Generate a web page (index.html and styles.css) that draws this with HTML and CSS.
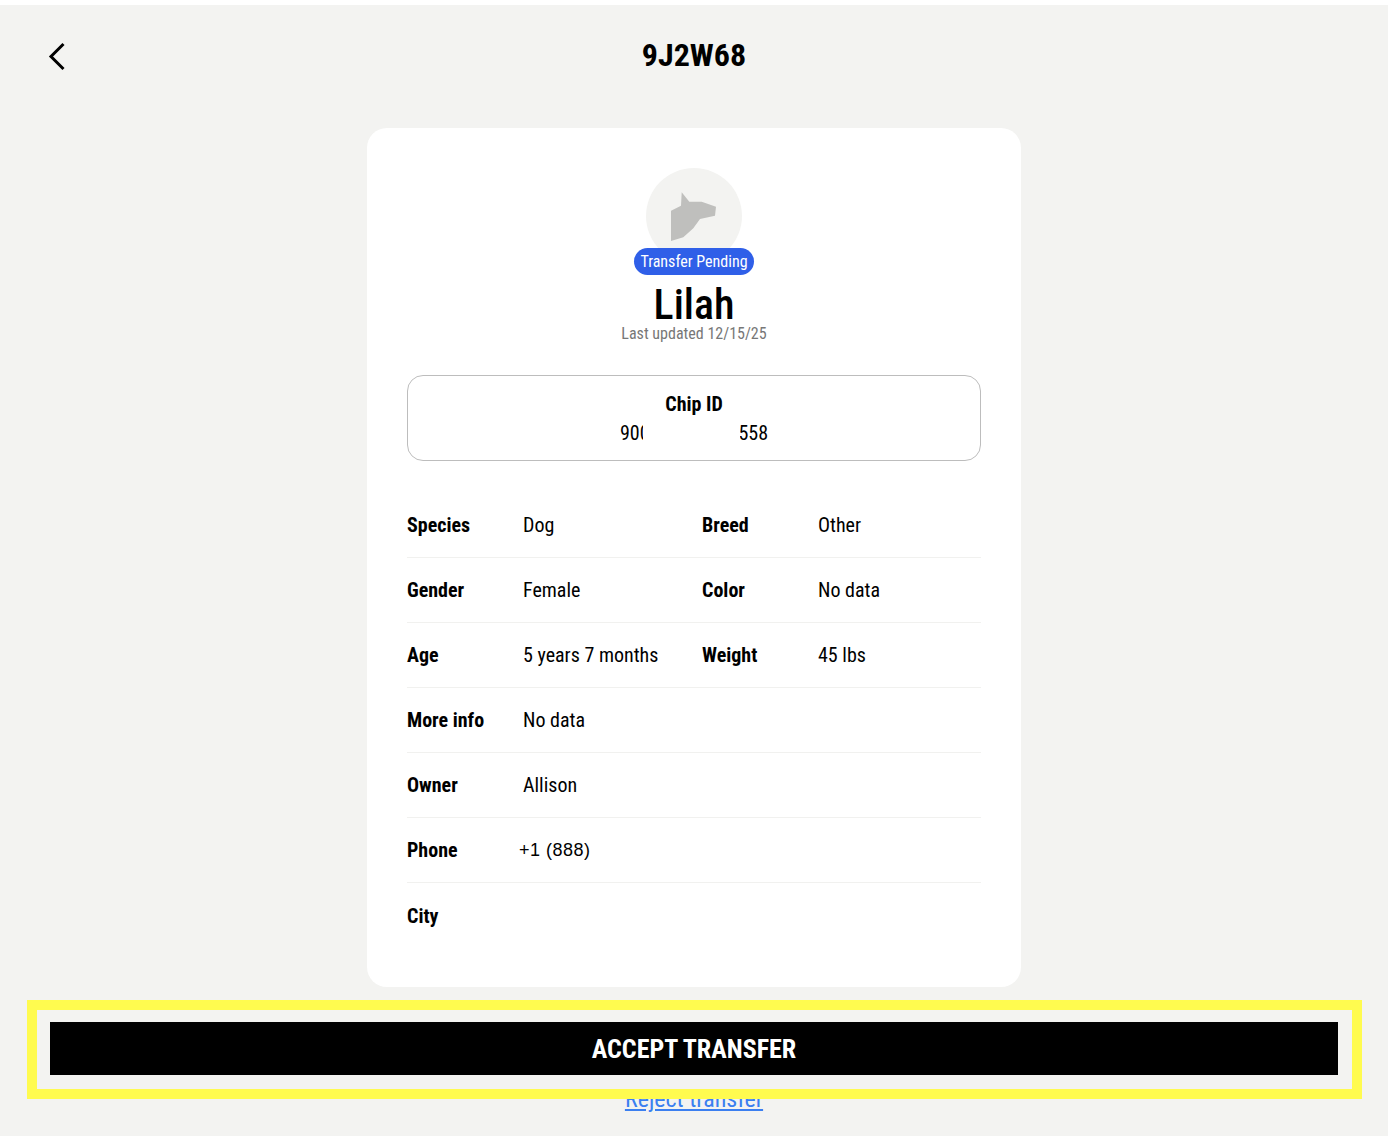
FILE: index.html
```
<!DOCTYPE html>
<html lang="en">
<head>
<meta charset="utf-8">
<title>9J2W68</title>
<link rel="stylesheet" href="styles.css">
</head>
<body>
<div class="top-strip"></div>
<main class="page">
  <header class="header">
    <svg class="back" width="24" height="32" viewBox="0 0 24 32" aria-hidden="true"><path d="M17.5 4 5 16.5 17.5 29" fill="none" stroke="#000" stroke-width="3"/></svg>
    <h1 class="title">9J2W68</h1>
  </header>
  <section class="card">
    <div class="avatar">
      <svg width="96" height="96" viewBox="0 0 96 96" aria-hidden="true"><path d="M35.7 24.3 43.3 33.7H55.7L70 38.7 69 47.7 54 51 47.3 60.3 37.3 69.3 25 73V42.7L35 37.7Z" fill="#bfbfbd"/></svg>
    </div>
    <span class="badge">Transfer Pending</span>
    <h2 class="name">Lilah</h2>
    <p class="updated">Last updated 12/15/25</p>
    <div class="chip">
      <div class="chip-label">Chip ID</div>
      <div class="chip-value"><span class="chip-digits">900164000271558<span class="chip-mask"></span></span></div>
    </div>
    <div class="rows">
      <div class="row"><b>Species</b><span>Dog</span><b>Breed</b><span>Other</span></div>
      <div class="row"><b>Gender</b><span>Female</span><b>Color</b><span>No data</span></div>
      <div class="row"><b>Age</b><span>5 years 7 months</span><b>Weight</b><span>45 lbs</span></div>
      <div class="row"><b>More info</b><span>No data</span></div>
      <div class="row"><b>Owner</b><span class="clip clip-owner">Allison B</span></div>
      <div class="row"><b>Phone</b><span class="clip clip-phone">+1 (888) 4</span></div>
      <div class="row row-last"><b>City</b><span></span></div>
    </div>
  </section>
  <button class="accept" type="button">ACCEPT TRANSFER</button>
  <a class="reject" href="#">Reject transfer</a>
</main>
<div class="highlight"></div>
</body>
</html>
```
FILE: styles.css
```
* { box-sizing: border-box; }
html, body { margin: 0; padding: 0; }
body {
  position: relative;
  height: 1136px;
  overflow: hidden;
  background: #f3f3f1;
  color: #000;
  font-family: "Roboto", "Liberation Sans", sans-serif;
  font-stretch: 75%;
}
.top-strip { height: 5px; background: #fff; }
.page { display: flex; flex-direction: column; align-items: center; }
.header { position: relative; width: 100%; height: 123px; }
.back { position: absolute; left: 46px; top: 35px; }
.title { margin: 0; padding-top: 32px; text-align: center; font-size: 32px; line-height: 36px; font-weight: 700; }
.card {
  width: 654px; height: 859px; padding: 40px;
  background: #fff; border-radius: 20px;
  display: flex; flex-direction: column; align-items: center;
}
.avatar { width: 96px; height: 96px; border-radius: 50%; background: #f3f3f1; flex: none; }
.avatar svg { display: block; }
.badge {
  margin-top: -16px; position: relative; height: 27px; width: 120px;
  border-radius: 14px; background: #2f5fe8; color: #fff;
  font-size: 16px; line-height: 27px; text-align: center; white-space: nowrap;
}
.name { margin: 8px 0 0; font-size: 42px; line-height: 44px; font-weight: 500; }
.updated { margin: -2px 0 0; font-size: 16px; line-height: 18px; color: #777; }
.chip {
  margin-top: 32px; width: 574px; height: 86px; flex: none;
  border: 1px solid #bdbdbd; border-radius: 16px; text-align: center; padding-top: 15px;
}
.chip-label { font-size: 20px; line-height: 26px; font-weight: 700; }
.chip-value { font-size: 20px; line-height: 28px; margin-top: 2px; }
.chip-digits { position: relative; display: inline-block; }
.chip-mask { position: absolute; left: 23px; width: 97px; top: 0; bottom: 0; background: #fff; }
.rows { margin-top: 32px; width: 574px; }
.row {
  display: grid; grid-template-columns: 116px 179px 116px 1fr;
  height: 65px; align-items: center;
  border-bottom: 1px solid #f1f1ef; font-size: 20px;
}
.row b { font-weight: 700; }
.row-last { border-bottom: 0; }
.clip { display: block; overflow: hidden; white-space: nowrap; }
.clip-owner { width: 56px; }
.clip-phone { width: 76px; margin-left: -4px; font-family: "Liberation Sans", sans-serif; font-size: 18px; letter-spacing: .5px; }
.accept {
  margin-top: 35px; width: 1288px; height: 53px; flex: none;
  background: #000; color: #fff; border: 0; padding: 0;
  font-family: inherit; font-stretch: inherit; font-size: 26px; font-weight: 700;
}
.reject { margin-top: 10px; color: #3b7ff0; font-size: 24px; line-height: 28px; }
.highlight {
  position: absolute; left: 27px; top: 1000px; width: 1335px; height: 99px;
  border: 10px solid #fffb4f;
}
```
